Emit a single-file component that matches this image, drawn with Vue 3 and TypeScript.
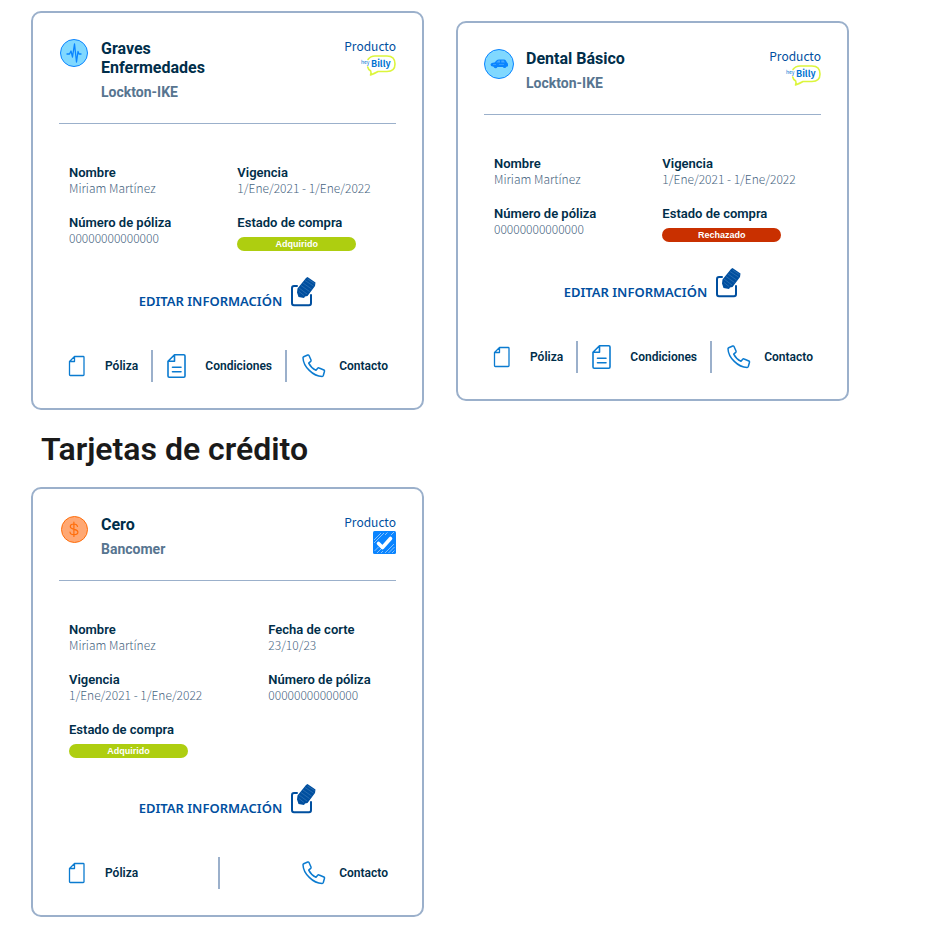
<script setup lang="ts">
type Icon = 'pulse' | 'car' | 'money'
type Action = 'poliza' | 'condiciones' | 'contacto'

interface Detail {
  label: string
  value: string
  badge?: 'ok' | 'rejected'
}

interface Product {
  title: string
  company: string
  icon: Icon
  brand: 'billy' | 'check'
  details: Detail[]
  actions: Action[]
}

const labels: Record<Action, string> = {
  poliza: 'Póliza',
  condiciones: 'Condiciones',
  contacto: 'Contacto',
}

const insuranceDetails = (status: string, badge: 'ok' | 'rejected'): Detail[] => [
  { label: 'Nombre', value: 'Miriam Martínez' },
  { label: 'Vigencia', value: '1/Ene/2021 - 1/Ene/2022' },
  { label: 'Número de póliza', value: '00000000000000' },
  { label: 'Estado de compra', value: status, badge },
]

const insurance: Product[] = [
  {
    title: 'Graves Enfermedades',
    company: 'Lockton-IKE',
    icon: 'pulse',
    brand: 'billy',
    details: insuranceDetails('Adquirido', 'ok'),
    actions: ['poliza', 'condiciones', 'contacto'],
  },
  {
    title: 'Dental Básico',
    company: 'Lockton-IKE',
    icon: 'car',
    brand: 'billy',
    details: insuranceDetails('Rechazado', 'rejected'),
    actions: ['poliza', 'condiciones', 'contacto'],
  },
]

const creditCards: Product[] = [
  {
    title: 'Cero',
    company: 'Bancomer',
    icon: 'money',
    brand: 'check',
    details: [
      { label: 'Nombre', value: 'Miriam Martínez' },
      { label: 'Fecha de corte', value: '23/10/23' },
      { label: 'Vigencia', value: '1/Ene/2021 - 1/Ene/2022' },
      { label: 'Número de póliza', value: '00000000000000' },
      { label: 'Estado de compra', value: 'Adquirido', badge: 'ok' },
    ],
    actions: ['poliza', 'contacto'],
  },
]

const sections = [
  { heading: '', products: insurance },
  { heading: 'Tarjetas de crédito', products: creditCards },
]
</script>

<template>
  <main class="page">
    <section v-for="section in sections" :key="section.heading">
      <h2 v-if="section.heading" class="heading">{{ section.heading }}</h2>
      <div class="cards">
        <article v-for="product in section.products" :key="product.title" class="card">
          <header class="card-header">
            <svg v-if="product.icon === 'pulse'" class="product-icon" viewBox="0 0 30 30" aria-hidden="true">
              <circle cx="15" cy="14" r="13.5" fill="#80d8ff" stroke="#0a84ff" />
              <path d="M8 15h2.500l1.500-3 1.500 6 2-13 2 18 1.500-10.500 1 2.500h2" fill="none" stroke="#0a84ff" stroke-width="1.300" stroke-linejoin="round" stroke-linecap="round" />
            </svg>
            <svg v-else-if="product.icon === 'car'" class="product-icon" viewBox="0 0 30 30" aria-hidden="true">
              <circle cx="15" cy="15" r="14.500" fill="#80d8ff" stroke="#0a84ff" />
              <path d="M6.500 15.500q.5-1.800 4-2l2.500-2.500q.5-.6 2-.6h5q1.200 0 1.700.800l1.300 2.300q1 .5 1 2v1.800l-1.600.4a2 2 0 0 1-3.600.2h-5.400a2 2 0 0 1-3.800-.2l-2.500-.6z" fill="#0a84ff" />
              <path d="M12.300 13.500l2-2h1.700v2zm5 0v-2h2.500l1 2z" fill="#45a8ff" />
              <path d="M9 15.500h3m3 0h5" stroke="#45a8ff" stroke-width=".7" />
            </svg>
            <svg v-else class="product-icon" viewBox="0 0 30 30" aria-hidden="true">
              <circle cx="15.500" cy="14.500" r="13" fill="#ffa873" stroke="#ff6d0a" />
              <path d="M18.500 11.500c-.3-1.600-1.700-2.500-3.600-2.500-2.200 0-3.600 1-3.600 2.600 0 3.900 7.600 1.700 7.600 5.500 0 1.600-1.500 2.600-3.800 2.600-2.300 0-3.900-1-4.100-2.700M14.900 7v14.500" fill="none" stroke="#ff6d0a" stroke-width="1.200" stroke-linecap="round" />
            </svg>
            <div class="names">
              <h3 class="title">{{ product.title }}</h3>
              <p class="company">{{ product.company }}</p>
            </div>
            <div class="product">
              <span>Producto</span>
              <svg v-if="product.brand === 'billy'" class="billy" viewBox="0 0 36 22" role="img" aria-label="hey Billy">
                <path d="M8 4.500Q10.500 1 15 1h12q8 0 8 8 0 7.500-8 7.500H18q-3.500 2-7.500 3.500 1-2 .2-4-2.500-1.500-3-4" fill="none" stroke="#dcf53c" stroke-width="1.600" stroke-linecap="round" stroke-linejoin="round" />
                <text x="1" y="9" class="hey">hey</text>
                <text x="11" y="12" class="billy-name">Billy</text>
              </svg>
              <svg v-else class="check" viewBox="0 0 23 23" aria-hidden="true">
                <rect width="23" height="23" rx="1.500" fill="#0a84ff" />
                <path d="M1 9l7-7M1 12L11 2M12 4l2.500-2.500M1.500 20l4-4M4 22l5-5M8 22l2-2M12 22l9-9M15.500 22l6-6M19 22l2.500-2.500M18 4l3-3" stroke="#b9dcff" stroke-width=".7" />
                <path d="M5.500 12.500l4 4 8-9" fill="none" stroke="#fff" stroke-width="3.600" stroke-linecap="round" stroke-linejoin="round" />
              </svg>
            </div>
          </header>

          <dl class="details">
            <div v-for="detail in product.details" :key="detail.label">
              <dt>{{ detail.label }}</dt>
              <dd v-if="detail.badge" class="badge" :class="detail.badge">{{ detail.value }}</dd>
              <dd v-else>{{ detail.value }}</dd>
            </div>
          </dl>

          <button type="button" class="edit">
            <span>EDITAR INFORMACIÓN</span>
            <svg viewBox="0 0 26 30" aria-hidden="true">
              <path d="M7 9H4Q2 9 2 11.200V26Q2 28.200 4 28.200h15Q21 28.200 21 26V18" fill="none" stroke="#004f9f" stroke-width="2" stroke-linecap="round" />
              <path d="M16 1l1.500-1 8 5.500-.5 3.500-7.500 10-2.500.5-1 1.500-5.500-1-1.500-4.500.5-4z" fill="#004f9f" />
              <path d="M15 3.500l8.500 5.500M13 6l8.500 6M11 8.500l8.500 6M9 11l8 6M9 14.500l5 4M17.500 2l7 4.500" stroke="#4f86bf" stroke-width=".5" />
            </svg>
          </button>

          <nav class="actions" :aria-label="product.title">
            <template v-for="(action, index) in product.actions" :key="action">
              <span v-if="index > 0" class="divider"></span>
              <a href="#" class="action">
                <svg viewBox="0 0 28 28" fill="none" stroke="#0b7bd0" stroke-linejoin="round" stroke-linecap="round" aria-hidden="true">
                  <path v-if="action === 'poliza'" d="M9.500 4.500h8.700q.8 0 .8.800v17.400q0 .8-.8.800H5.300q-.8 0-.8-.8V9.500zV9.500H4.500" stroke-width="1.300" />
                  <g v-else-if="action === 'condiciones'" stroke-width="1.600">
                    <path d="M9.500 2.800h9.300q1.200 0 1.200 1.200v20q0 1.200-1.200 1.200H4.200Q3 25.200 3 24V9.300zV9.300H3" />
                    <path d="M7.500 15.200h8.500M7.500 19.700h8.500" />
                  </g>
                  <path v-else d="M4.700 4.700L8.700 3q.9-.3 1.300.5l2 4.500q.3.800-.3 1.400l-2 1.700q2.400 4.800 7.300 7.200l1.700-2q.6-.7 1.400-.3l4.800 2q.8.400.6 1.300l-1.200 4.200q-.3.900-1.200.9-6.800 0-12.800-6Q4.200 12.500 4 5.700q0-.7.700-1z" stroke-width="1.500" />
                </svg>
                <span>{{ labels[action] }}</span>
              </a>
            </template>
          </nav>
        </article>
      </div>
    </section>
  </main>
</template>

<style>
body {
  margin: 0;
  background: #fff;
}
</style>

<style scoped>
.page {
  padding: 11px 31px 17px;
  font-family: Roboto, sans-serif;
}

.cards {
  display: grid;
  grid-template-columns: repeat(auto-fit, minmax(320px, 393px));
  gap: 32px;
  align-items: center;
}

.heading {
  margin: 20px 10px 18px;
  color: #1a1a1a;
  font-size: 32px;
  font-weight: 600;
  line-height: 39px;
}

.card {
  padding: 26px;
  border: 2px solid #9bb0cb;
  border-radius: 10px;
}

.card-header {
  display: flex;
  align-items: flex-start;
  padding-bottom: 21px;
  border-bottom: 1px solid #9bb0cb;
}

.product-icon {
  flex: none;
  width: 30px;
  height: 30px;
}

.names {
  flex: 0 1 140px;
  margin-left: 12px;
}

.title,
.company {
  margin: 0;
  font-size: 16px;
  font-weight: 700;
  line-height: 19px;
  color: #002e4a;
}

.company {
  margin-top: 6px;
  font-size: 14px;
  color: #577590;
}

.product {
  display: flex;
  flex-direction: column;
  align-items: flex-end;
  gap: 2px;
  margin-left: auto;
  color: #004f9f;
  font-family: "Noto Sans CJK JP", sans-serif;
  font-size: 12px;
  font-weight: 400;
  line-height: 14px;
}

.billy {
  width: 36px;
  height: 22px;
}

.billy-name {
  fill: #0073d1;
  font-family: "Noto Sans CJK JP", sans-serif;
  font-size: 9px;
  font-weight: 700;
}

.hey {
  fill: #0073d1;
  font-family: "Noto Sans CJK JP", sans-serif;
  font-size: 5px;
}

.check {
  width: 23px;
  height: 23px;
}

.details {
  display: grid;
  grid-template-columns: auto auto;
  justify-content: start;
  gap: 18px 66px;
  margin: 0;
  padding: 41px 10px 0;
}

.details > div {
  height: 32px;
}

dt {
  color: #002e4a;
  font-size: 13px;
  font-weight: 600;
  line-height: 15px;
}

dd {
  margin: 0;
  color: #47657f;
  font-family: "Noto Sans CJK JP", sans-serif;
  font-size: 12px;
  font-weight: 300;
  line-height: 16px;
}

.badge {
  width: 119px;
  margin-top: 7px;
  border-radius: 7px;
  color: #fff;
  font-family: "Liberation Sans", sans-serif;
  font-size: 9px;
  font-weight: 700;
  line-height: 14px;
  text-align: center;
}

.ok {
  background: #aece10;
}

.rejected {
  background: #c93000;
}

.edit {
  display: flex;
  align-items: flex-end;
  gap: 8px;
  margin: 30px auto 0;
  padding: 0;
  border: 0;
  background: none;
  color: #004f9f;
  font-family: "Noto Sans", sans-serif;
  font-size: 13px;
  font-weight: 600;
  line-height: 12px;
  cursor: pointer;
}

.edit svg {
  width: 26px;
  height: 30px;
}

.actions {
  display: flex;
  align-items: center;
  justify-content: space-between;
  margin-top: 43px;
  padding: 0 8px 0 6px;
}

.divider {
  width: 2px;
  height: 32px;
  background: #9bb0cb;
}

.action {
  display: flex;
  align-items: center;
  gap: 12px;
  color: #002e4a;
  font-size: 12px;
  font-weight: 600;
  line-height: 16px;
  text-decoration: none;
}

.action svg {
  width: 28px;
  height: 28px;
}
</style>
